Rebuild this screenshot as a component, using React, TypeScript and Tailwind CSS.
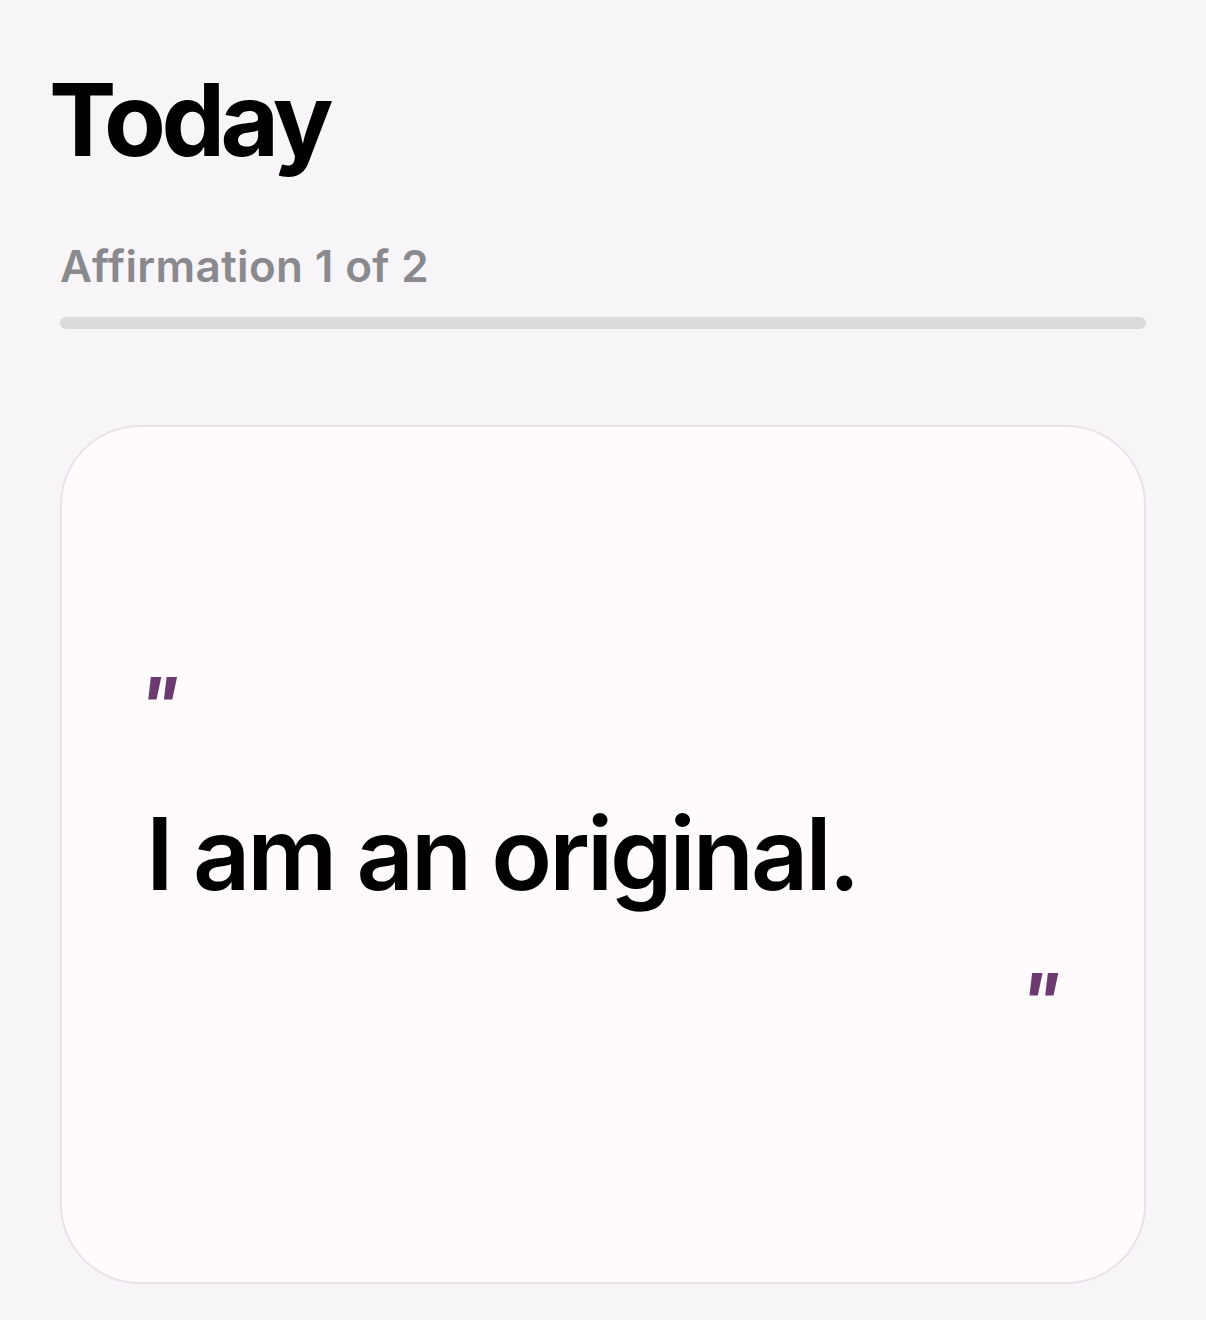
export default function App() {
  return (
    <div className="min-h-[1320px] bg-[#f8f5f8] font-['Inter',sans-serif] pt-[58px]">
      <h1 className="px-[49px] text-[101px] font-bold leading-[1.21] tracking-[-0.045em] text-black">
        Today
      </h1>
      <div className="px-[60px]">
        <p className="mt-[64px] text-[44px] font-semibold leading-none tracking-[0.008em] text-[#8a8a8e]">
          Affirmation 1 of 2
        </p>
        <div className="mt-[29px] h-[12px] w-full rounded-full bg-[#dcdadd]" />
        <div className="mt-[96px] flex h-[859px] flex-col rounded-[80px] border-2 border-[#e9e2e9] bg-[#fffbfc] pl-[84px] pr-[84px] pt-[240px]">
          <span className="-ml-[8px] self-start text-[74px] font-bold italic leading-none text-[#6b3a6e]">"</span>
          <p className="mt-[63px] text-[100px] font-semibold leading-none tracking-[-0.03em] text-black">
            I am an original.
          </p>
          <span className="mt-[59px] self-end text-[74px] font-bold italic leading-none text-[#6b3a6e]">"</span>
        </div>
      </div>
    </div>
  )
}
